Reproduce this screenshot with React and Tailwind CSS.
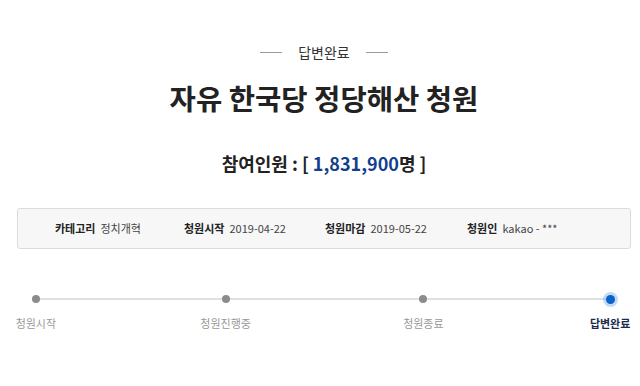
const font = { fontFamily: '"Noto Sans CJK KR", "Noto Sans", sans-serif' };

function Step({ label, active, className }) {
  return (
    <div className={`flex w-[60px] flex-col items-center ${className || ''}`}>
      <div className="flex h-[14px] items-center justify-center">
        {active ? (
          <div className="h-[9px] w-[9px] rounded-full bg-[#0a63c9] shadow-[0_0_0_3px_rgba(80,150,230,0.35)]" />
        ) : (
          <div className="h-[8px] w-[8px] rounded-full bg-[#8c8c8c]" />
        )}
      </div>
      <div
        className={`mt-[9px] whitespace-nowrap text-[11px] leading-[16px] ${
          active ? 'font-bold text-[#1c2b4a]' : 'text-[#999]'
        }`}
      >
        {label}
      </div>
    </div>
  );
}

export default function App() {
  const info = [
    ['카테고리', '정치개혁', 'ml-[37px] w-[129px]'],
    ['청원시작', '2019-04-22', 'w-[141px]'],
    ['청원마감', '2019-05-22', 'w-[142px]'],
    ['청원인', 'kakao - ***', ''],
  ];

  return (
    <div className="h-[386px] w-[640px] overflow-hidden bg-white" style={font}>
      <div className="ml-[17px] w-[614px]">
        <div className="mt-[42px] flex items-center justify-center gap-[16px]">
          <div className="h-px w-[22px] bg-[#999]" />
          <div className="text-[14px] leading-[20px] text-[#333]">답변완료</div>
          <div className="h-px w-[22px] bg-[#999]" />
        </div>

        <h1 className="mt-[19px] text-center text-[28.6px] font-bold leading-[34px] text-[#222]">
          자유 한국당 정당해산 청원
        </h1>

        <div className="mt-[36px] text-center text-[18px] font-bold leading-[24px] text-[#222]">
          참여인원 : [ <span className="text-[#123f8f]">1,831,900</span>명 ]
        </div>

        <div className="mt-[33px] flex h-[41px] items-center rounded-[3px] border border-[#dcdcdc] bg-[#f7f7f7] text-[11px]">
          {info.map(([k, v, m]) => (
            <div key={k} className={`flex shrink-0 items-center gap-[5px] ${m}`}>
              <span className="font-bold text-[#222]">{k}</span>
              <span className="text-[#444]">{v}</span>
            </div>
          ))}
        </div>
      </div>

      <div className="relative mt-[43px]">
        <div className="absolute left-[36px] top-[6px] h-[2px] w-[575px] bg-[#e0e0e0]" />
        <div className="relative flex pl-[6px]">
          <Step label="청원시작" />
          <Step label="청원진행중" className="ml-[130px]" />
          <Step label="청원종료" className="ml-[138px]" />
          <Step label="답변완료" active className="ml-[127px]" />
        </div>
      </div>
    </div>
  );
}
